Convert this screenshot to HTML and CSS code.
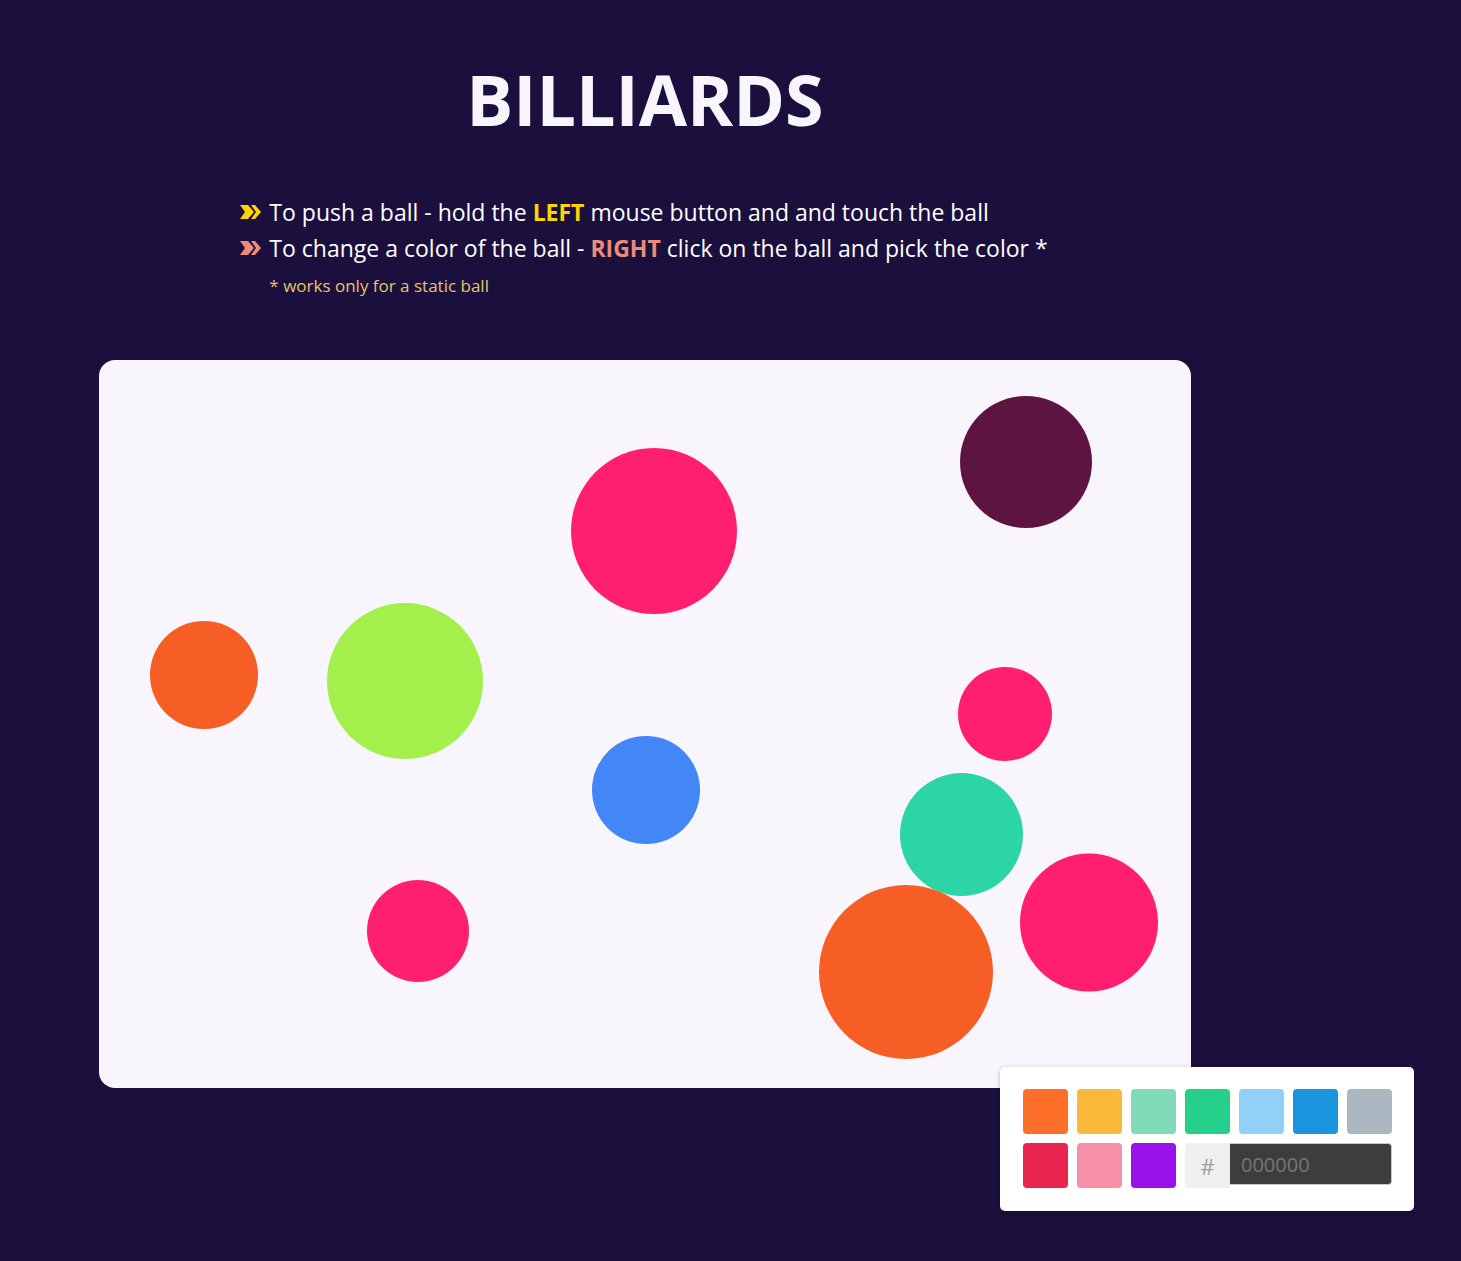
FILE: index.html
```html
<!DOCTYPE html>
<html lang="en">
<head>
<meta charset="utf-8">
<title>Billiards</title>
<link rel="stylesheet" href="styles.css">
</head>
<body>
<main class="app">
  <h1 class="title">BILLIARDS</h1>
  <section class="rules">
    <div class="rules-inner">
      <p class="rule">
        <svg class="arrow" viewBox="0 0 22 14" width="22" height="14"><path d="M0 0h8l6 7-6 7H0l5-7z M11 0h4l6 7-6 7h-4l5-7z" fill="#ffd400"/></svg>
        <span>To push a ball - hold the <b class="left">LEFT</b> mouse button and and touch the ball</span>
      </p>
      <p class="rule">
        <svg class="arrow" viewBox="0 0 22 14" width="22" height="14"><path d="M0 0h8l6 7-6 7H0l5-7z M11 0h4l6 7-6 7h-4l5-7z" fill="#ee8a78"/></svg>
        <span>To change a color of the ball - <b class="right">RIGHT</b> click on the ball and pick the color *</span>
      </p>
      <p class="note">* works only for a static ball</p>
    </div>
  </section>
  <section class="stage">
    <svg class="table" viewBox="0 0 1092 728" width="1092" height="728">
      <g class="balls">
        <circle cx="927" cy="102" r="66" fill="#5d1441"/>
        <circle cx="555" cy="171" r="83" fill="#ff1f6e"/>
        <circle cx="105" cy="315" r="54" fill="#f75e25"/>
        <circle cx="306" cy="321" r="78" fill="#a3ef4c"/>
        <circle cx="906" cy="354" r="47" fill="#ff1f6e"/>
        <circle cx="547" cy="430" r="54" fill="#4286f7"/>
        <circle cx="862.5" cy="474.5" r="61.5" fill="#2bd5a5"/>
        <circle cx="990" cy="562.5" r="69" fill="#ff1f6e"/>
        <circle cx="319" cy="571" r="51" fill="#ff1f6e"/>
        <circle cx="807" cy="612" r="87" fill="#f75e25"/>
      </g>
    </svg>
    <div class="picker">
      <div class="swatches">
        <span class="swatch" style="background:#fd6f29"></span>
        <span class="swatch" style="background:#fab93a"></span>
        <span class="swatch" style="background:#82dbb8"></span>
        <span class="swatch" style="background:#26d08a"></span>
        <span class="swatch" style="background:#93d0f8"></span>
        <span class="swatch" style="background:#1b94e0"></span>
        <span class="swatch" style="background:#abb8c2"></span>
        <span class="swatch" style="background:#e8244f"></span>
        <span class="swatch" style="background:#f590a8"></span>
        <span class="swatch" style="background:#9a10ea"></span>
        <div class="hex">
          <span class="hash">#</span>
          <input class="hex-input" type="text" placeholder="000000">
        </div>
      </div>
    </div>
  </section>
</main>
</body>
</html>
```

FILE: styles.css
```css
html, body {
  margin: 0;
  padding: 0;
}
body {
  background: #1b103d;
  font-family: "Open Sans", "Noto Sans", sans-serif;
  color: #f8f5fd;
  min-height: 1261px;
}
.app {
  width: 1092px;
  margin-left: 99px;
  padding-top: 56px;
}
.title {
  margin: 0;
  text-align: center;
  font-size: 70px;
  font-weight: 700;
  line-height: 86px;
  letter-spacing: 0;
  color: #f8f5fd;
}
.rules {
  display: flex;
  justify-content: center;
  margin-top: 52px;
}
.rules-inner {
  display: flex;
  flex-direction: column;
  padding-right: 2px;
}
.rule {
  margin: 0;
  display: flex;
  align-items: center;
  gap: 7px;
  font-size: 23px;
  line-height: 36px;
  color: #ffffff;
}
.arrow {
  flex: none;
  display: block;
}
.left {
  color: #ffd400;
  font-weight: 700;
}
.right {
  color: #ee8a78;
  font-weight: 700;
}
.note {
  margin: 5px 0 0 29px;
  font-size: 17px;
  line-height: 30px;
  color: #e6c46b;
}
.stage {
  position: relative;
  margin-top: 59px;
  width: 1092px;
  height: 728px;
}
.table {
  display: block;
  background: #f8f5fc;
  border-radius: 16px;
}
.balls circle {
  filter: blur(0.4px);
}
.picker {
  position: absolute;
  left: 901px;
  top: 707px;
  width: 414px;
  height: 144px;
  box-sizing: border-box;
  padding: 22px 22px 0 23px;
  background: #ffffff;
  border-radius: 5px;
  box-shadow: 0 1px 4px rgba(0, 0, 0, 0.25);
}
.swatches {
  display: flex;
  flex-wrap: wrap;
  gap: 9px;
}
.swatch {
  width: 45px;
  height: 45px;
  border-radius: 4px;
}
.hex {
  display: flex;
  width: 207px;
  height: 45px;
}
.hash {
  width: 45px;
  height: 45px;
  background: #f0f0f0;
  border-radius: 4px 0 0 4px;
  color: #98a1a4;
  font-size: 22px;
  display: flex;
  align-items: center;
  justify-content: center;
}
.hex-input {
  box-sizing: border-box;
  width: 162px;
  height: 42px;
  margin: 0;
  padding: 0 11px;
  border: 1px solid #c8c8c8;
  border-left: none;
  border-radius: 0 4px 4px 0;
  background: #3d3d3d;
  color: #ddd;
  font-family: "Open Sans", "Noto Sans", sans-serif;
  font-size: 20px;
  outline: none;
}
.hex-input::placeholder {
  color: #767676;
}
```
